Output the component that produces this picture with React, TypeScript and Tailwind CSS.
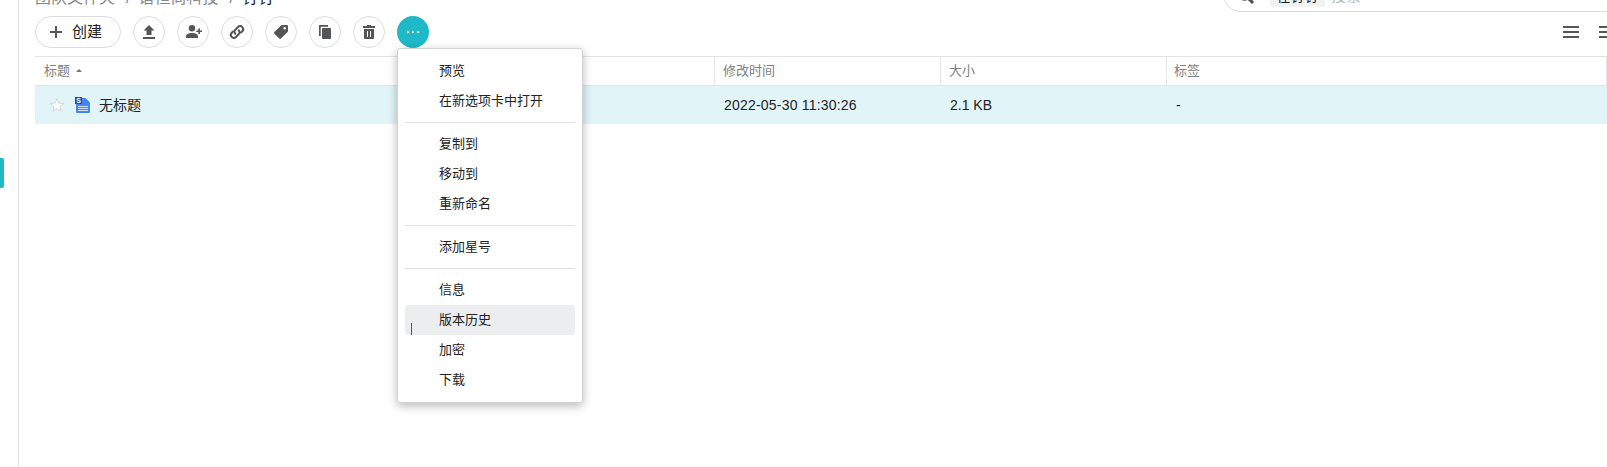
import React from "react";

const groups = [
  ["预览", "在新选项卡中打开"],
  ["复制到", "移动到", "重新命名"],
  ["添加星号"],
  ["信息", "版本历史", "加密", "下载"],
];

const icons: React.ReactNode[] = [
  <path key="u" d="M10 3 15.500 8.500H12.500V13H7.500V8.500H4.500ZM4 15h12v2H4z" />,
  <g key="p">
    <circle cx="9" cy="6.200" r="3.200" />
    <path d="M3 16v-1.700c0-2 2.500-3.300 6-3.300s6 1.300 6 3.300V16zM15.300 6.400h1.700v2h2v1.700h-2v2h-1.700v-2h-2V8.400h2z" />
  </g>,
  <g key="l" fill="none" stroke="currentColor" strokeWidth="2" strokeLinecap="round">
    <path d="M8.300 11.700a2.800 2.800 0 0 1 0-4L11 5a2.900 2.900 0 0 1 4.300.1 2.900 2.900 0 0 1 0 4.100l-1.400 1.400" />
    <path d="M11.700 8.300a2.800 2.800 0 0 1 0 4L9 15a2.900 2.900 0 0 1-4.300-.1 2.900 2.900 0 0 1 0-4.100l1.400-1.400" />
  </g>,
  <path
    key="t"
    fillRule="evenodd"
    d="M11 3h5a1 1 0 0 1 1 1v5a1.500 1.500 0 0 1-.4 1L10 16.600a1.200 1.200 0 0 1-1.700 0L3.400 11.700a1.200 1.200 0 0 1 0-1.700L10 3.400A1.500 1.500 0 0 1 11 3ZM13.700 5a1.300 1.300 0 1 0 0 2.600 1.300 1.300 0 0 0 0-2.600Z"
  />,
  <path key="c" d="M4.500 3H13v1.700H5.700V14H4V3.500A.5.5 0 0 1 4.500 3ZM8 6h7a1 1 0 0 1 1 1v9a1 1 0 0 1-1 1H8a1 1 0 0 1-1-1V7a1 1 0 0 1 1-1Z" />,
  <path
    key="d"
    fillRule="evenodd"
    d="M8 3h4v1h4v2H4V4h4ZM5 7h10v9a1 1 0 0 1-1 1H6a1 1 0 0 1-1-1ZM8 9v6h1V9ZM11 9v6h1V9Z"
  />,
];

function Toolbar() {
  return (
    <div className="flex h-8 items-center gap-3">
      <button className="flex h-8 w-[86px] items-center rounded-full border border-[#dcdddf] pl-3.5 text-[15px] text-[#222]">
        <svg className="mr-[10px] h-3 w-3 shrink-0" viewBox="0 0 12 12" fill="#55575a">
          <path d="M5 0h2v5h5v2H7v5H5V7H0V5h5z" />
        </svg>
        <span className="pt-px">创建</span>
      </button>
      {icons.map((icon, i) => (
        <button key={i} className="flex h-8 w-8 items-center justify-center rounded-full border border-[#dcdddf] text-[#535557]">
          <svg className="h-5 w-5" viewBox="0 0 20 20" fill="currentColor">
            {icon}
          </svg>
        </button>
      ))}
      <div className="relative h-8 w-8">
        <button className="flex h-8 w-8 items-center justify-center gap-[3px] rounded-full bg-[#1fb8c8]">
          <i className="h-0.5 w-0.5 bg-white" />
          <i className="h-0.5 w-0.5 bg-white" />
          <i className="h-0.5 w-0.5 bg-white" />
        </button>
        <Menu />
      </div>
      <div className="ml-auto flex w-[44px] shrink-0 gap-5 overflow-hidden">
        <Lines />
        <Lines />
      </div>
    </div>
  );
}

function Lines() {
  return (
    <svg className="h-3 w-4 shrink-0" viewBox="0 0 16 12" fill="#555759">
      <path d="M0 0h16v2H0zM0 5h16v2H0zM0 10h16v2H0z" />
    </svg>
  );
}

function Menu() {
  return (
    <div className="absolute top-[32px] left-0 z-10 w-[186px] rounded-[3px] border border-[#d2d3d5] bg-white px-[7px] py-[7px] shadow-[0_3px_10px_rgba(0,0,0,0.28)]">
      {groups.map((items, i) => (
        <div key={i} className={i ? "mt-1.5 border-t border-[#e0e1e2] pt-1.5" : ""}>
          {items.map((item) => (
            <div
              key={item}
              className={
                "flex h-[30px] items-center rounded-[3px] pl-[34px] text-[13px] whitespace-nowrap text-[#222] " +
                (item === "版本历史" ? "relative bg-[#ecedef]" : "")
              }
            >
              {item === "版本历史" && <i className="absolute bottom-0 left-1.5 h-3 w-px bg-[#1668b0]" />}
              {item}
            </div>
          ))}
        </div>
      ))}
    </div>
  );
}

function Star() {
  return (
    <svg className="h-4 w-4" viewBox="0 0 16 16" fill="#fff" stroke="#d3d6d8">
      <path d="m8 1.500 1.800 4.600 4.900.3-3.800 3.100 1.300 4.800L8 11.600l-4.200 2.700 1.300-4.800-3.800-3.100 4.900-.3z" />
    </svg>
  );
}

function FileIcon() {
  return (
    <svg className="h-4 w-[15px]" viewBox="0 0 15 16">
      <path d="M1 1h9.500L15 5.500V15a1 1 0 0 1-1 1H2a1 1 0 0 1-1-1z" fill="#4285f4" />
      <path d="M3 9.500h10M3 11.500h10M3 13.500h10" stroke="#d5e4fd" />
      <path d="M0 0h7v7H0z" fill="#1c4fb5" />
      <text x="3.500" y="6" textAnchor="middle" fontSize="7" fontWeight="bold" fill="#fff">
        S
      </text>
    </svg>
  );
}

export default function App() {
  return (
    <div className="flex h-[467px] w-[1607px] overflow-hidden bg-white font-['Liberation_Sans','Noto_Sans_CJK_SC',sans-serif]">
      <aside className="w-[19px] shrink-0 border-r border-[#dfe0e1] pt-[158px]">
        <div className="h-[30px] w-1 rounded-r-[2px] bg-[#1fb8c8]" />
      </aside>
      <main className="min-w-0 flex-1 pl-4">
        <div className="flex h-4 items-end justify-between">
          <nav className="mb-1.5 flex shrink-0 text-[16px] leading-6 whitespace-nowrap text-[#85878a]">
            团队文件夹<span className="mr-2 ml-[11px]">/</span>谱恒尚科技<span className="mr-2 ml-[11px]">/</span>
            <span className="text-[#222]">钉钉</span>
          </nav>
          <div className="-mr-5 mb-1 flex h-9 w-[404px] shrink-0 items-center rounded-full border border-[#d8d9da] pl-3.5 text-[14px]">
            <svg className="mt-1 h-4 w-4" viewBox="0 0 16 16" fill="none" stroke="#4d4f52" strokeWidth="2.500">
              <circle cx="6.500" cy="6.500" r="5" />
              <path d="m10 10 5 5" strokeWidth="3" />
            </svg>
            <span className="ml-4 flex h-[26px] w-[55px] items-center justify-center rounded-[3px] bg-[#f1f2f3] pt-1 text-[#222]">在钉钉</span>
            <span className="ml-1.5 pt-1 text-[15px] text-[#b5b8bb]">搜索</span>
          </div>
        </div>
        <Toolbar />
        <section className="mt-2">
          <div className="grid h-[30px] grid-cols-[680px_226px_226px_440px] border-y border-[#e2e3e4] text-[13px] text-[#808080]">
            <div className="flex items-center border-r border-[#e5e6e7] pl-[9px]">
              标题
              <svg className="mb-0.5 ml-[6px] h-[3px] w-1.5" viewBox="0 0 6 3" fill="#777">
                <path d="m3 0 3 3H0z" />
              </svg>
            </div>
            <div className="flex items-center border-r border-[#e5e6e7] pl-2">修改时间</div>
            <div className="flex items-center border-r border-[#e5e6e7] pl-2">大小</div>
            <div className="flex items-center border-r border-[#e0e5f0] pl-[7px]">标签</div>
          </div>
          <div className="grid h-[38px] grid-cols-[680px_226px_226px_440px] bg-[#e1f4f7] text-[14px] text-[#222]">
            <div className="flex items-center pl-3.5">
              <Star />
              <span className="ml-2.5 flex">
                <FileIcon />
              </span>
              <span className="ml-[9px]">无标题</span>
            </div>
            <div className="flex items-center pl-[9px] tracking-[0.2px]">2022-05-30 11:30:26</div>
            <div className="flex items-center pl-[9px]">2.1 KB</div>
            <div className="flex items-center pl-[9px]">-</div>
          </div>
        </section>
      </main>
    </div>
  );
}
